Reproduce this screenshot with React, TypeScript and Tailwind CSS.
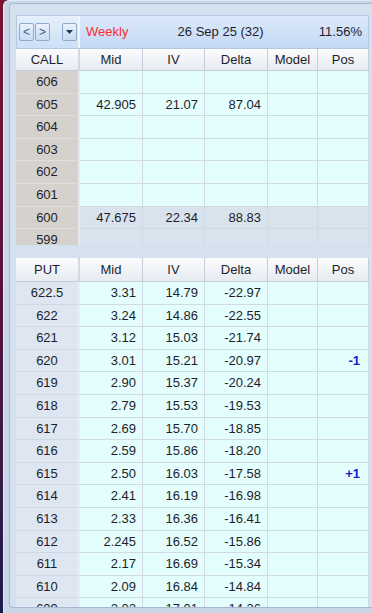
import React from 'react';

type Row = { strike: string; mid?: string; iv?: string; delta?: string; pos?: string; itm?: boolean };

const calls: Row[] = [
  { strike: '606' },
  { strike: '605', mid: '42.905', iv: '21.07', delta: '87.04' },
  { strike: '604' },
  { strike: '603' },
  { strike: '602' },
  { strike: '601' },
  { strike: '600', mid: '47.675', iv: '22.34', delta: '88.83', itm: true },
  { strike: '599', itm: true },
];

const puts: Row[] = [
  { strike: '622.5', mid: '3.31', iv: '14.79', delta: '-22.97' },
  { strike: '622', mid: '3.24', iv: '14.86', delta: '-22.55' },
  { strike: '621', mid: '3.12', iv: '15.03', delta: '-21.74' },
  { strike: '620', mid: '3.01', iv: '15.21', delta: '-20.97', pos: '-1' },
  { strike: '619', mid: '2.90', iv: '15.37', delta: '-20.24' },
  { strike: '618', mid: '2.79', iv: '15.53', delta: '-19.53' },
  { strike: '617', mid: '2.69', iv: '15.70', delta: '-18.85' },
  { strike: '616', mid: '2.59', iv: '15.86', delta: '-18.20' },
  { strike: '615', mid: '2.50', iv: '16.03', delta: '-17.58', pos: '+1' },
  { strike: '614', mid: '2.41', iv: '16.19', delta: '-16.98' },
  { strike: '613', mid: '2.33', iv: '16.36', delta: '-16.41' },
  { strike: '612', mid: '2.245', iv: '16.52', delta: '-15.86' },
  { strike: '611', mid: '2.17', iv: '16.69', delta: '-15.34' },
  { strike: '610', mid: '2.09', iv: '16.84', delta: '-14.84' },
  { strike: '609', mid: '2.02', iv: '17.01', delta: '-14.26' },
];

const cols = 'grid grid-cols-[64px_63px_62px_63px_50px_51px]';

function ColumnHeader({ first, tall }: { first: string; tall?: boolean }) {
  const cell =
    'flex items-center justify-center border-r border-b border-[#c3cedc] bg-linear-to-b from-[#fbfcfd] to-[#e6ebf1]';
  return (
    <div className={`${cols} ${tall ? 'h-[24px]' : 'h-[22px]'} shrink-0`}>
      <div className={`${cell} border-r-2 border-r-[#d0dbe8]`}>{first}</div>
      <div className={cell}>Mid</div>
      <div className={cell}>IV</div>
      <div className={cell}>Delta</div>
      <div className={cell}>Model</div>
      <div className={cell}>Pos</div>
    </div>
  );
}

function GridRow({ row, strikeBg }: { row: Row; strikeBg: string }) {
  const bg = row.itm ? 'bg-[#d9e3ee]' : 'bg-[#e4fdfd]';
  const cell = `flex items-center justify-end pr-[6px] border-r border-b border-[#d0d9e5] ${bg}`;
  return (
    <div className={`${cols} h-[22.6px] shrink-0`}>
      <div className={`flex items-center justify-center border-b border-r-2 ${strikeBg}`}>{row.strike}</div>
      <div className={cell}>{row.mid}</div>
      <div className={cell}>{row.iv}</div>
      <div className={cell}>{row.delta}</div>
      <div className={cell}></div>
      <div className={`${cell} pr-[8px] font-bold text-[#1a1ad0]`}>{row.pos}</div>
    </div>
  );
}

export default function App() {
  return (
    <div className="w-[372px] h-[613px] flex overflow-hidden bg-linear-to-b from-[#7a1232] via-[#55103c] to-[#1c1a4c] font-['Liberation_Sans',Arial,sans-serif] text-[13px] text-[#1e1e2a]">
      <div className="ml-[3px] flex-1 flex flex-col bg-[#c8d6e8] rounded-tl-[6px] border-l border-t border-[#e2eaf4] pt-[2px] pl-[5px] pb-[5px]">
        <div className="flex-1 flex flex-col min-h-0 bg-[#d6e1ef] rounded-tl-[4px] rounded-bl-[4px] border-l border-t border-b border-[#a7b9d0] pl-[6px] pt-[11px] pr-[3px]">
          <header className="flex h-[34px] shrink-0 border border-[#b4c8e2]">
            <div className="w-[63px] flex items-center gap-[1px] pl-[2px] border-r-2 border-[#eef4fb] bg-linear-to-b from-[#e6f0fc] to-[#cddff6]">
              <button className="w-[15px] h-[18px] flex items-center justify-center rounded-[2px] border border-[#8ea9ca] bg-linear-to-b from-[#eaf2fc] to-[#c8dbf3] text-[12px] text-[#3d5c88] leading-none">
                &lt;
              </button>
              <button className="w-[15px] h-[18px] flex items-center justify-center rounded-[2px] border border-[#8ea9ca] bg-linear-to-b from-[#eaf2fc] to-[#c8dbf3] text-[12px] text-[#3d5c88] leading-none">
                &gt;
              </button>
              <button className="ml-[11px] w-[15px] h-[18px] flex items-center justify-center rounded-[2px] border border-[#8ea9ca] bg-linear-to-b from-[#eaf2fc] to-[#c8dbf3]">
                <svg width="7" height="4" viewBox="0 0 7 4">
                  <path d="M0 0h7L3.5 4z" fill="#1f3560" />
                </svg>
              </button>
            </div>
            <div className="flex-1 flex items-center justify-between pl-[6px] pr-[6px] bg-linear-to-b from-[#dbe9fb] to-[#c4d9f4]">
              <span className="text-[#ff2b2b]">Weekly</span>
              <span className="-ml-[6px]">26 Sep 25 (32)</span>
              <span>11.56%</span>
            </div>
          </header>

          <ColumnHeader first="CALL" />
          <div className="h-[174px] shrink-0 overflow-hidden flex flex-col">
            {calls.map((r) => (
              <GridRow key={r.strike} row={r} strikeBg="bg-[#d5d2ce] border-[#e2dfdb] border-r-[#e4e9f0]" />
            ))}
          </div>

          <div className="h-[13px] shrink-0" />

          <ColumnHeader first="PUT" tall />
          <div className="flex-1 min-h-0 overflow-hidden flex flex-col">
            {puts.map((r) => (
              <GridRow key={r.strike} row={r} strikeBg="bg-[#dde6f1] border-[#cfd9e5] border-r-[#e6edf5]" />
            ))}
          </div>
        </div>
      </div>
    </div>
  );
}
